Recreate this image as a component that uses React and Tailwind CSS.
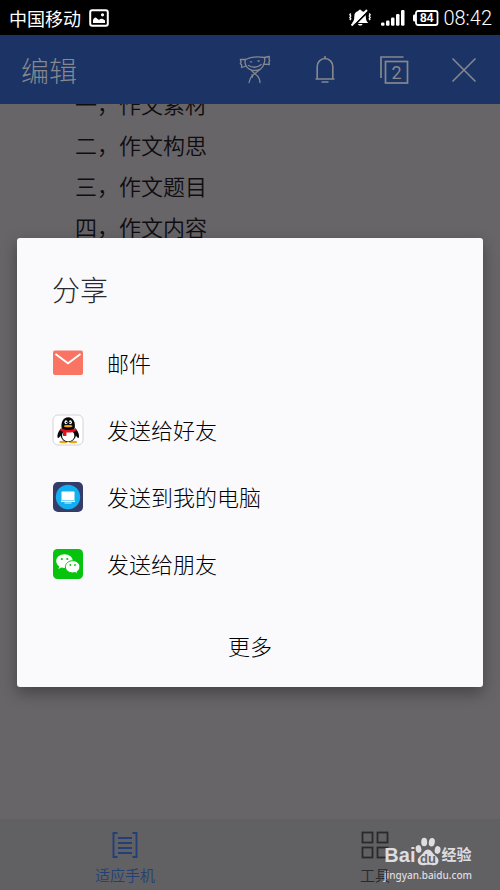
import React from "react";

function PictureIcon() {
  return (
    <svg width="20" height="18" viewBox="0 0 20 18" fill="none" aria-hidden="true">
      <rect x="1.2" y="1.2" width="17.6" height="15.6" rx="2" stroke="#fff" strokeWidth="2" />
      <path d="M4 14v-3c1-2.500 2.500-3.500 4-1.500l2 1.500c1.500-2 4-1.500 6 .5V14z" fill="#fff" />
      <circle cx="13.500" cy="5.800" r="1.600" fill="#fff" />
    </svg>
  );
}

function MutedBell() {
  return (
    <svg width="22" height="18" viewBox="0 0 22 18" fill="none" aria-hidden="true">
      <path d="M11 .8c1 0 1.500.5 1.600 1.200 3.200.7 4.200 2.800 4.200 5.500 0 3 .6 4.800 2.500 6.500H3c1.700-1.700 2.300-3.500 2.300-6.500 0-2.700 1-4.800 4.100-5.500C9.500 1.300 10 .8 11 .8z" fill="#fff" />
      <path d="M9 15h4.500c-.5 2-4 2-4.500 0z" fill="#fff" />
      <path d="M4 17.500 19.500 2" stroke="#000" strokeWidth="1.800" />
      <path d="M2.500 16.500 18 1" stroke="#fff" strokeWidth="1.900" />
      <path d="M1.800 4.500l-1 1.300 1 1.300-1 1.300 1 1.300-1 1.300M20.200 4.500l1 1.300-1 1.300 1 1.300-1 1.300 1 1.300" stroke="#fff" strokeWidth="1.300" />
    </svg>
  );
}

function Signal() {
  return (
    <svg width="24" height="18" viewBox="0 0 24 18" fill="#fff" aria-hidden="true">
      <rect x="0" y="13.500" width="3.500" height="3.200" rx="1.200" />
      <rect x="5" y="11.500" width="3.500" height="5.200" rx="1.200" />
      <rect x="10" y="8.500" width="3.500" height="8.200" rx="1.200" />
      <rect x="15" y="5" width="3.500" height="11.700" rx="1.200" />
      <rect x="20" y="1" width="3.500" height="15.700" rx="1.200" />
    </svg>
  );
}

function Battery() {
  return (
    <svg width="27" height="18" viewBox="0 0 27 18" fill="none" aria-hidden="true">
      <path d="M6 2h17.500a2 2 0 0 1 2 2v10a2 2 0 0 1-2 2H6a2 2 0 0 1-2-2V4a2 2 0 0 1 2-2z" stroke="#fff" strokeWidth="1.800" />
      <path d="M4 5.500H2.500c-1 0-1.500.6-1.500 1.500v4c0 .9.500 1.500 1.500 1.500H4z" fill="#fff" />
      <text x="14.800" y="13.200" fill="#fff" fontSize="12" fontWeight="700" textAnchor="middle" fontFamily="Liberation Sans, sans-serif">84</text>
    </svg>
  );
}

function MascotIcon() {
  return (
    <svg width="32" height="30" viewBox="0 0 32 30" fill="none" stroke="currentColor" strokeWidth="1.300" strokeLinejoin="round" strokeLinecap="round" aria-hidden="true">
      <path d="M6.500 4.500C12 1.800 20 1.500 25.500 2.500l4.800-1-.2 3.200.6 1-.8 1.300.5 2.500-5.500-.3c-1.500 4-4.500 6.300-8.700 6.300-4 0-7.400-1.600-9-4.500l-4.700 1.500.2-2.500L1.300 8.500l.8-1.300-.8-2.700z" />
      <path d="M6.500 4.500c-.8 2-.5 4.500.7 6.500M25.500 2.500c.5 2 .3 4.500-.8 6.700" />
      <path d="M9.500 10.500c4.500 2.500 9 2.200 12.700-1M11.500 6.800h1.200M19 6h1.200" />
      <path d="M12.500 15.500l3.300 3.200 4.200-3.500M15.800 18.700c-3.600 2-5 5-5.700 8.800M15.800 18.700c3.500 2 5 5 5.200 8.800M13.500 22l-.5-2" />
    </svg>
  );
}

function BellIcon() {
  return (
    <svg width="22" height="30" viewBox="0 0 22 30" fill="none" stroke="currentColor" strokeWidth="1.600" aria-hidden="true">
      <path d="M11 1v2.500M3.200 24V11.500a7.800 8 0 0 1 15.600 0V24M1.500 24h19M7.500 27h7" />
    </svg>
  );
}

function PagesIcon() {
  return (
    <svg width="30" height="30" viewBox="0 0 30 30" fill="none" stroke="currentColor" strokeWidth="1.700" aria-hidden="true">
      <path d="M2 23V2h22.500" />
      <rect x="6.500" y="6.500" width="22" height="21.500" />
      <text x="17.500" y="23.500" fontSize="18" textAnchor="middle" stroke="none" fill="currentColor" fontFamily="Roboto, sans-serif">2</text>
    </svg>
  );
}

function CloseIcon() {
  return (
    <svg width="26" height="26" viewBox="0 0 26 26" fill="none" stroke="currentColor" strokeWidth="1.600" aria-hidden="true">
      <path d="M1.500 1.500l23 23M24.500 1.500l-23 23" />
    </svg>
  );
}

function MailIcon() {
  return (
    <svg width="32" height="32" viewBox="0 0 32 32" fill="none" aria-hidden="true">
      <rect x="1" y="3.500" width="30" height="24.500" rx="2" fill="#f97463" />
      <path d="M3.500 7 16 16.200 28.500 7" stroke="#fff" strokeWidth="1.900" />
    </svg>
  );
}

function PenguinIcon() {
  return (
    <svg width="32" height="32" viewBox="0 0 32 32" fill="none" aria-hidden="true">
      <rect x="1" y="1" width="30" height="30" rx="5" fill="#fff" stroke="#cfcfd3" strokeWidth="0.900" />
      <ellipse cx="11.500" cy="28" rx="4.300" ry="1.300" fill="#e9a51b" />
      <ellipse cx="21" cy="28" rx="4.300" ry="1.300" fill="#e9a51b" />
      <path d="M8.500 15C6 18 4.700 21.500 5.800 24c.9.300 2-1 2.700-2.500C9.500 25.500 12 28 16 28s7-2.500 8-6.500c.8 1.500 1.800 2.800 2.700 2.500 1.100-2.500-.2-6-2.700-9z" fill="#08080a" />
      <ellipse cx="16.200" cy="21.800" rx="6.200" ry="5.700" fill="#fff" />
      <path d="M9.700 14.500c-1-6 1.300-11.300 6.500-11.300s7.500 5.300 6.500 11.300c-3 2.500-10 2.500-13 0z" fill="#08080a" />
      <ellipse cx="14" cy="8.300" rx="1.500" ry="2" fill="#fff" />
      <ellipse cx="18.400" cy="8.300" rx="1.500" ry="2" fill="#fff" />
      <circle cx="14.500" cy="8.500" r=".8" fill="#000" />
      <circle cx="17.900" cy="8.500" r=".8" fill="#000" />
      <ellipse cx="16.200" cy="12.200" rx="4.200" ry="1.100" fill="#f2a81e" />
      <path d="M8.800 14c4 2.800 11 2.800 15 0l.6 2.500c-3 2-7.200 2.300-10 2v3.300c-1.200.4-2.600.3-3.500-.1l.3-3.900-3-1.300z" fill="#e5121d" />
    </svg>
  );
}

function ComputerIcon() {
  return (
    <svg width="32" height="32" viewBox="0 0 32 32" fill="none" aria-hidden="true">
      <rect x="1" y="1" width="30" height="30" rx="5" fill="#343d69" />
      <circle cx="16" cy="16" r="12.200" fill="#12b0f0" />
      <rect x="9.500" y="10.500" width="13" height="8.500" rx=".6" fill="#fff" />
      <path d="M9 19.500h14v1.500H9zM12.500 21.500h7v1h-7z" fill="#e7f8ff" />
    </svg>
  );
}

function ChatIcon() {
  return (
    <svg width="32" height="32" viewBox="0 0 32 32" fill="none" aria-hidden="true">
      <rect x="1" y="1" width="30" height="30" rx="4.500" fill="#06c30d" />
      <path d="M12.500 6.200c-4.700 0-8.300 3-8.300 6.900 0 2.200 1.200 4.100 3 5.400l-.8 2.600 3-1.500c1 .3 2 .4 3.100.4 4.700 0 8.300-3 8.300-6.900s-3.600-6.900-8.300-6.900z" fill="#fff" />
      <path d="M20.700 12.700c-4.100 0-7.300 2.700-7.300 6.100s3.200 6.100 7.300 6.100c.9 0 1.700-.1 2.500-.4l2.500 1.400-.7-2.200c1.800-1.100 2.900-2.900 2.900-4.900 0-3.400-3.100-6.100-7.200-6.100z" fill="#fff" stroke="#06c30d" strokeWidth="1" />
      <g fill="#06c30d">
        <circle cx="9.800" cy="11" r="1.100" />
        <circle cx="15.300" cy="11" r="1.100" />
        <circle cx="18.300" cy="17" r=".9" />
        <circle cx="23" cy="17" r=".9" />
      </g>
    </svg>
  );
}

function ReflowIcon() {
  return (
    <svg width="26" height="28" viewBox="0 0 26 28" fill="none" stroke="currentColor" strokeWidth="1.900" aria-hidden="true">
      <path d="M5.500 2H1.500v24H5.500M20.500 2h4v24h-4M6 7h14M6 12h14M6 17h14M6 22h14" />
    </svg>
  );
}

function ToolsIcon() {
  return (
    <svg width="28" height="28" viewBox="0 0 28 28" fill="none" stroke="currentColor" strokeWidth="1.800" aria-hidden="true">
      <rect x="1.500" y="1.500" width="10" height="10" />
      <rect x="16.500" y="1.500" width="10" height="10" />
      <rect x="1.500" y="16.500" width="10" height="10" />
      <rect x="16.500" y="16.500" width="10" height="10" />
    </svg>
  );
}

function PawLogo() {
  return (
    <svg width="26" height="29" viewBox="0 0 26 29" fill="#dedde0" aria-hidden="true">
      <ellipse cx="3.500" cy="12" rx="2.800" ry="3.900" transform="rotate(-12 3.500 12)" />
      <ellipse cx="9.200" cy="5" rx="3" ry="4.300" />
      <ellipse cx="16.800" cy="5.200" rx="3" ry="4.300" transform="rotate(10 16.800 5.200)" />
      <ellipse cx="22.600" cy="13" rx="2.900" ry="3.900" transform="rotate(12 22.600 13)" />
      <path d="M13 12.500c3 0 4 3 6.500 5.300 2.300 2 4.300 3.700 4 6.500-.3 3-2.700 4.200-5.500 3.900-2-.2-3-.5-5-.5s-3 .4-5 .5c-2.800.2-5-1.200-5.300-3.900-.3-2.800 1.600-4.500 3.800-6.500 2.500-2.300 3.500-5.300 6.500-5.300z" />
      <text x="13" y="26" fontSize="13" fontWeight="700" textAnchor="middle" fill="#656366" fontFamily="Liberation Sans, sans-serif">du</text>
    </svg>
  );
}

const lines = ["一，作文素材", "二，作文构思", "三，作文题目", "四，作文内容"];

const targets = [
  { label: "邮件", Icon: MailIcon },
  { label: "发送给好友", Icon: PenguinIcon },
  { label: "发送到我的电脑", Icon: ComputerIcon },
  { label: "发送给朋友", Icon: ChatIcon },
];

export default function App() {
  return (
    <div className="relative flex min-h-screen flex-col overflow-hidden bg-[#676568] font-['Noto_Sans_CJK_SC',sans-serif]">
      <div className="flex h-[35px] items-center justify-between bg-black pr-2 pl-[9px] text-white">
        <div className="flex items-center gap-2">
          <span className="text-lg leading-6">中国移动</span>
          <PictureIcon />
        </div>
        <div className="flex items-center">
          <MutedBell />
          <span className="ml-[10px]"><Signal /></span>
          <span className="ml-[7px]"><Battery /></span>
          <time className="ml-1 font-[Roboto,sans-serif] text-xl leading-6 font-light">08:42</time>
        </div>
      </div>

      <header className="flex h-[69px] items-center justify-between bg-[#1b3365] pr-[23px] pl-[21px] text-[#86888f]">
        <h1 className="text-[28px] leading-10 font-light">编辑</h1>
        <div className="flex items-center">
          <button type="button" aria-label="助手"><MascotIcon /></button>
          <button type="button" aria-label="通知" className="ml-[43px]"><BellIcon /></button>
          <button type="button" aria-label="窗口" className="ml-[43px]"><PagesIcon /></button>
          <button type="button" aria-label="关闭" className="ml-[42px]"><CloseIcon /></button>
        </div>
      </header>

      <main className="flex-1 overflow-hidden">
        <div className="-mt-[21px] pl-[75px] text-[22px] leading-[41px] font-[350] text-[#0f0d10]">
          {lines.map((line) => (
            <p key={line}>{line}</p>
          ))}
        </div>
      </main>

      <nav className="grid h-[71px] grid-cols-2 bg-[#616063]">
        <button type="button" className="flex flex-col items-center gap-1 pt-3 text-[15px] leading-6 font-[350] text-[#233f78]">
          <ReflowIcon />
          适应手机
        </button>
        <button type="button" className="flex flex-col items-center gap-1 pt-3 text-[15px] leading-6 font-[350] text-[#2a292b]">
          <ToolsIcon />
          工具
        </button>
      </nav>

      <div className="absolute right-7 bottom-[6px] flex flex-col items-center text-[#dedde0]">
        <div className="flex items-end">
          <span className="font-['Liberation_Sans',sans-serif] text-xl leading-[21px] font-bold">Bai</span>
          <PawLogo />
          <span className="text-[15px] leading-6 font-bold">经验</span>
        </div>
        <span className="font-['Noto_Sans',sans-serif] text-[10px] leading-[18px] font-medium">jingyan.baidu.com</span>
      </div>

      <div className="absolute inset-x-0 top-[35px] bottom-0 flex items-center px-[17px]">
        <section role="dialog" aria-labelledby="share-title" className="w-full rounded-[3px] bg-[#faf9fc] pt-[31px] pb-3 shadow-[0_6px_16px_rgba(0,0,0,0.35)]">
          <h2 id="share-title" className="px-[35px] text-[28px] leading-10 font-light text-[#2a292c]">分享</h2>
          <ul className="mt-5">
            {targets.map(({ label, Icon }) => (
              <li key={label}>
                <button type="button" className="flex h-[67px] w-full items-center gap-[23px] px-[35px] text-[22px] font-light text-black">
                  <Icon />
                  {label}
                </button>
              </li>
            ))}
          </ul>
          <button type="button" className="mt-[18px] h-[60px] w-full text-[22px] font-light text-black">更多</button>
        </section>
      </div>
    </div>
  );
}
